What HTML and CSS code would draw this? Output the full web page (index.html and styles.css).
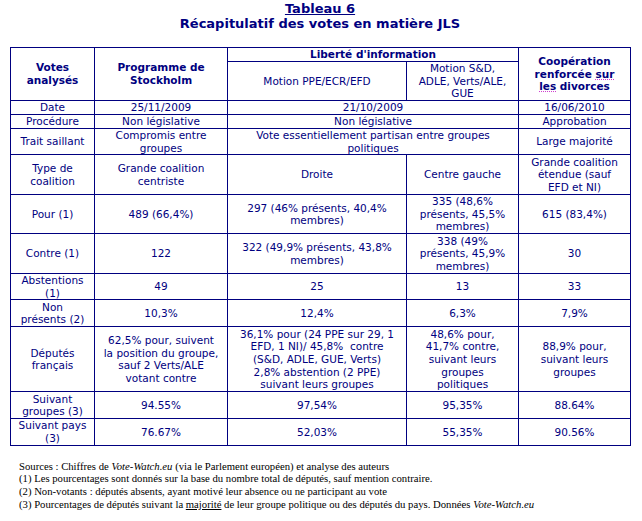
FILE: index.html
```html
<!DOCTYPE html>
<html lang="fr">
<head>
<meta charset="utf-8">
<title>Tableau 6</title>
<link rel="stylesheet" href="styles.css">
</head>
<body>
<div class="page">
  <div class="title">
    <div class="t1">Tableau 6</div>
    <div class="t2">Récapitulatif des votes en matière JLS</div>
  </div>
  <table class="votes">
    <colgroup>
      <col class="c1"><col class="c2"><col class="c3"><col class="c4"><col class="c5">
    </colgroup>
    <tr class="h1">
      <th rowspan="2">Votes<br>analysés</th>
      <th rowspan="2">Programme de<br>Stockholm</th>
      <th colspan="2">Liberté d'information</th>
      <th rowspan="2">Coopération<br>renforcée <span class="sp">sur </span><br><span class="sp">les</span> divorces</th>
    </tr>
    <tr class="h2">
      <td>Motion PPE/ECR/EFD</td>
      <td>Motion S&amp;D,<br>ADLE, Verts/ALE,<br>GUE</td>
    </tr>
    <tr class="l1">
      <td>Date</td><td>25/11/2009</td><td colspan="2">21/10/2009</td><td>16/06/2010</td>
    </tr>
    <tr class="l1">
      <td>Procédure</td><td>Non législative</td><td colspan="2">Non législative</td><td>Approbation</td>
    </tr>
    <tr class="l2">
      <td>Trait saillant</td><td>Compromis entre<br>groupes</td><td colspan="2">Vote essentiellement partisan entre groupes<br>politiques</td><td>Large majorité</td>
    </tr>
    <tr class="l3">
      <td>Type de<br>coalition</td><td>Grande coalition<br>centriste</td><td>Droite</td><td>Centre gauche</td><td>Grande coalition<br>étendue (sauf<br>EFD et NI)</td>
    </tr>
    <tr class="l3a">
      <td>Pour (1)</td><td>489 (66,4%)</td><td>297 (46% présents, 40,4%<br>membres)</td><td>335 (48,6%<br>présents, 45,5%<br>membres)</td><td>615 (83,4%)</td>
    </tr>
    <tr class="l3">
      <td>Contre (1)</td><td>122</td><td>322 (49,9% présents, 43,8%<br>membres)</td><td>338 (49%<br>présents, 45,9%<br>membres)</td><td>30</td>
    </tr>
    <tr class="l2">
      <td>Abstentions<br>(1)</td><td>49</td><td>25</td><td>13</td><td>33</td>
    </tr>
    <tr class="l2b">
      <td>Non<br>présents (2)</td><td>10,3%</td><td>12,4%</td><td>6,3%</td><td>7,9%</td>
    </tr>
    <tr class="l5">
      <td>Députés<br>français</td>
      <td>62,5% pour, suivent<br>la position du groupe,<br>sauf 2 Verts/ALE<br>votant contre</td>
      <td>36,1% pour (24 PPE sur 29, 1<br>EFD, 1 NI)/ 45,8%&nbsp; contre<br>(S&amp;D, ADLE, GUE, Verts)<br>2,8% abstention (2 PPE)<br>suivant leurs groupes</td>
      <td>48,6% pour,<br>41,7% contre,<br>suivant leurs<br>groupes<br>politiques</td>
      <td>88,9% pour,<br>suivant leurs<br>groupes</td>
    </tr>
    <tr class="l2b">
      <td>Suivant<br>groupes (3)</td><td>94.55%</td><td>97,54%</td><td>95,35%</td><td>88.64%</td>
    </tr>
    <tr class="l2">
      <td>Suivant pays<br>(3)</td><td>76.67%</td><td>52,03%</td><td>55,35%</td><td>90.56%</td>
    </tr>
  </table>
  <div class="notes">
    <p>Sources : Chiffres de <i>Vote-Watch.eu</i> (via le Parlement européen) et analyse des auteurs</p>
    <p>(1) Les pourcentages sont donnés sur la base du nombre total de députés, sauf mention contraire.</p>
    <p>(2) Non-votants : députés absents, ayant motivé leur absence ou ne participant au vote</p>
    <p>(3) Pourcentages de députés suivant la <u>majorité</u> de leur groupe politique ou des députés du pays. Données <i>Vote-Watch.eu</i></p>
  </div>
</div>
</body>
</html>
```

FILE: styles.css
```css
html, body {
  margin: 0;
  padding: 0;
  background: #ffffff;
}
.page {
  width: 620px;
  padding: 0 0 0 10px;
}
.title {
  text-align: center;
  color: #000080;
  font-family: "DejaVu Sans", Verdana, sans-serif;
  font-weight: bold;
  font-size: 13px;
  line-height: 15px;
  padding-top: 1px;
}
.t1 {
  text-decoration: underline;
}
.votes {
  margin-top: 16px;
  border-collapse: collapse;
  table-layout: fixed;
  width: 620px;
  color: #000080;
  font-family: "DejaVu Sans", Verdana, sans-serif;
  font-size: 10.5px;
  line-height: 12.6px;
}
.votes td, .votes th {
  border: 1px solid #000080;
  padding: 0 2px;
  text-align: center;
  vertical-align: middle;
}
.votes th {
  font-weight: bold;
}
.c1 { width: 84px; }
.c2 { width: 133px; }
.c3 { width: 179px; }
.c4 { width: 112px; }
.c5 { width: 112px; }
.h1 { height: 14px; }
.h2 { height: 39px; }
.l1 { height: 14px; }
.l2 { height: 26px; }
.l2b { height: 27px; }
.l3 { height: 40px; }
.l3a { height: 39px; }
.l5 { height: 65px; }
.sp {
  text-decoration: underline dotted #d040d0;
}
.notes {
  margin-top: 14px;
  padding-left: 9px;
  font-family: "Liberation Serif", "Times New Roman", serif;
  font-size: 10.7px;
  line-height: 12.8px;
  color: #000000;
}
.notes p {
  margin: 0;
}
```
